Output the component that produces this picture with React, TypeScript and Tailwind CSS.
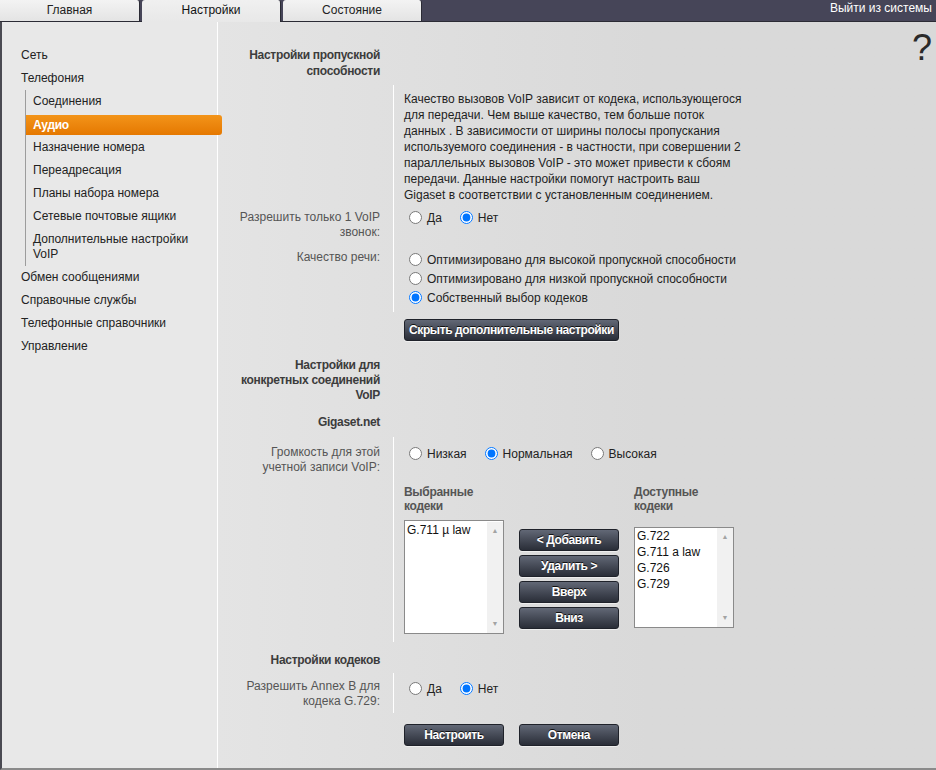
import { useState } from "react";

// left menu of the settings page
const topMenu = ["Сеть", "Телефония"];
const subMenu = [
  "Соединения",
  "Аудио",
  "Назначение номера",
  "Переадресация",
  "Планы набора номера",
  "Сетевые почтовые ящики",
  "Дополнительные настройки VoIP",
];
const bottomMenu = ["Обмен сообщениями", "Справочные службы", "Телефонные справочники", "Управление"];

function DarkButton({ children, className = "" }: { children: React.ReactNode; className?: string }) {
  return (
    <button
      className={
        "block h-[22px] w-[100px] whitespace-nowrap rounded-[3px] border border-[#1f222a] bg-gradient-to-b from-[#626876] to-[#2a2e38] text-[12px] font-bold tracking-[-0.4px] text-white shadow-[0_1px_0_rgba(255,255,255,0.5)] [text-shadow:0_-1px_0_#111] " +
        className
      }
    >
      {children}
    </button>
  );
}

function Radio({ name, label, checked, onChange }: { name: string; label: string; checked: boolean; onChange: () => void }) {
  return (
    <label className="flex items-center">
      <input type="radio" name={name} checked={checked} onChange={onChange} className="ml-[5px] h-[13px] w-[13px]" />
      <span className="ml-[5px] text-[#222]">{label}</span>
    </label>
  );
}

function Field({
  label,
  children,
  divider = true,
  labelClass = "",
  cellClass = "",
}: {
  label?: React.ReactNode;
  children: React.ReactNode;
  divider?: boolean;
  labelClass?: string;
  cellClass?: string;
}) {
  return (
    <div className="flex">
      <div className={"w-[150px] shrink-0 text-right leading-[15px] text-[#555] " + labelClass}>{label}</div>
      <div className={"ml-[13px] border-l pl-[10px] " + (divider ? "border-white " : "border-transparent ") + cellClass}>
        {children}
      </div>
    </div>
  );
}

function ListBox({ items, className = "" }: { items: string[]; className?: string }) {
  return (
    <div className={"flex w-[100px] border border-[#8a8a8a] bg-white " + className}>
      <div className="flex-1 pl-[2px] leading-[16px] text-[#111]">
        {items.map((it) => (
          <div key={it}>{it}</div>
        ))}
      </div>
      <div className="flex w-[16px] flex-col items-center justify-between bg-[#f1f1f1] py-[5px] text-[7px] leading-[8px] text-[#a3a3a3]">
        <span>▲</span>
        <span>▼</span>
      </div>
    </div>
  );
}

export default function App() {
  const [single, setSingle] = useState("no");
  const [quality, setQuality] = useState("own");
  const [volume, setVolume] = useState("normal");
  const [annex, setAnnex] = useState("no");

  return (
    <div className="h-[770px] w-[936px] overflow-hidden bg-[#d9d9d9] font-['Liberation_Sans',Arial,sans-serif] text-[12px]">
      {/* top bar with tabs */}
      <div className="flex h-[22px] items-start gap-[2px] border-b border-[#2b2b35] bg-[#464558]">
        <div className="h-[21px] w-[140px] rounded-tr-[3px] border-r border-[#2b2b35] bg-gradient-to-b from-[#f3f3f3] to-[#e4e4e4] text-center leading-[21px] text-[#222]">
          Главная
        </div>
        <div className="relative z-10 h-[22px] w-[139px] rounded-t-[3px] border-r border-[#2b2b35] bg-gradient-to-b from-[#f0f0f0] to-[#e8e8e8] text-center leading-[21px] text-[#111]">
          Настройки
        </div>
        <div className="h-[21px] w-[139px] rounded-t-[3px] border-r border-[#2b2b35] bg-gradient-to-b from-[#f3f3f3] to-[#e4e4e4] text-center leading-[21px] text-[#222]">
          Состояние
        </div>
        <div className="ml-auto pr-[4px] pt-[1px] leading-[14px] text-white">Выйти из системы</div>
      </div>

      <div className="flex h-[748px] border-b-2 border-l-2 border-b-[#8a8a8a] border-l-[#4a4a52]">
        {/* sidebar */}
        <div className="relative z-10 w-[216px] shrink-0 border-r border-white bg-[#e8e8e8] pt-[22px] text-[#222]">
          {topMenu.map((m) => (
            <div key={m} className="h-[23px] pl-[19px] leading-[23px]">
              {m}
            </div>
          ))}
          <div className="ml-[23px] border-l border-[#9c9c9c]">
            {subMenu.map((m) =>
              m === "Аудио" ? (
                <div key={m} className="flex h-[23px] items-center">
                  <div className="h-[20px] w-[196px] shrink-0 rounded-r-[3px] bg-gradient-to-b from-[#f39418] to-[#e57800] pl-[7px] font-bold leading-[20px] tracking-[-0.3px] text-white">
                    {m}
                  </div>
                </div>
              ) : (
                <div key={m} className="py-[4px] pl-[7px] pr-[20px] leading-[15px]">
                  {m}
                </div>
              )
            )}
          </div>
          {bottomMenu.map((m) => (
            <div key={m} className="h-[23px] pl-[19px] leading-[23px]">
              {m}
            </div>
          ))}
        </div>

        {/* main pane */}
        <div className="flex flex-1 bg-gradient-to-r from-[#e4e4e4] via-[#d9d9d9] via-60% to-[#d9d9d9]">
          <div className="flex-1 pl-[12px] pt-[25px]">
            <div className="w-[150px] text-right font-bold leading-[16px] tracking-[-0.3px] text-[#3c3c3c]">
              Настройки пропускной способности
            </div>

            <div className="mt-[6px]">
              <Field cellClass="pt-[6px] pb-[6px]">
                <div className="leading-[16px] text-[#1e1e1e]">
                  Качество вызовов VoIP зависит от кодека, использующегося
                  <br />
                  для передачи. Чем выше качество, тем больше поток
                  <br />
                  данных . В зависимости от ширины полосы пропускания
                  <br />
                  используемого соединения - в частности, при совершении 2
                  <br />
                  параллельных вызовов VoIP - это может привести к сбоям
                  <br />
                  передачи. Данные настройки помогут настроить ваш
                  <br />
                  Gigaset в соответствии с установленным соединением.
                </div>
              </Field>
              <Field label="Разрешить только 1 VoIP звонок:" labelClass="pt-[1px] pb-[10px]" cellClass="pt-[1px]">
                <div className="flex h-[15px] items-center gap-[13px]">
                  <Radio name="single" label="Да" checked={single === "yes"} onChange={() => setSingle("yes")} />
                  <Radio name="single" label="Нет" checked={single === "no"} onChange={() => setSingle("no")} />
                </div>
              </Field>
              <Field label="Качество речи:" cellClass="pb-[5px]">
                <div className="flex h-[19px] items-center">
                  <Radio name="q" label="Оптимизировано для высокой пропускной способности" checked={quality === "high"} onChange={() => setQuality("high")} />
                </div>
                <div className="flex h-[19px] items-center">
                  <Radio name="q" label="Оптимизировано для низкой пропускной способности" checked={quality === "low"} onChange={() => setQuality("low")} />
                </div>
                <div className="flex h-[19px] items-center">
                  <Radio name="q" label="Собственный выбор кодеков" checked={quality === "own"} onChange={() => setQuality("own")} />
                </div>
              </Field>
            </div>

            <div className="mt-[7px]">
              <Field divider={false}>
                <DarkButton className="w-[215px]">Скрыть дополнительные настройки</DarkButton>
              </Field>
            </div>

            <div className="mt-[17px] w-[150px] text-right font-bold leading-[15px] tracking-[-0.3px] text-[#3c3c3c]">
              Настройки для конкретных соединений VoIP
            </div>
            <div className="mt-[12px] w-[150px] text-right font-bold leading-[15px] tracking-[-0.3px] text-[#3c3c3c]">Gigaset.net</div>

            <div className="mt-[7px]">
              <Field label="Громкость для этой учетной записи VoIP:" labelClass="pt-[8px]" cellClass="pt-[9px] pb-[8px]">
                <div className="flex h-[15px] items-center gap-[13px]">
                  <Radio name="v" label="Низкая" checked={volume === "low"} onChange={() => setVolume("low")} />
                  <Radio name="v" label="Нормальная" checked={volume === "normal"} onChange={() => setVolume("normal")} />
                  <Radio name="v" label="Высокая" checked={volume === "high"} onChange={() => setVolume("high")} />
                </div>
                <div className="mt-[24px] flex">
                  <div className="w-[100px]">
                    <div className="font-bold leading-[14px] tracking-[-0.3px] text-[#555]">
                      Выбранные
                      <br />
                      кодеки
                    </div>
                    <ListBox items={["G.711 µ law"]} className="mt-[7px] h-[114px] pt-[1px]" />
                  </div>
                  <div className="ml-[15px] flex w-[100px] flex-col gap-[4px] pt-[44px]">
                    <DarkButton className="h-[21px]">&lt; Добавить</DarkButton>
                    <DarkButton className="h-[21px]">Удалить &gt;</DarkButton>
                    <DarkButton className="h-[21px]">Вверх</DarkButton>
                    <DarkButton className="h-[21px]">Вниз</DarkButton>
                  </div>
                  <div className="ml-[15px] w-[100px]">
                    <div className="font-bold leading-[14px] tracking-[-0.3px] text-[#555]">
                      Доступные
                      <br />
                      кодеки
                    </div>
                    <ListBox items={["G.722", "G.711 a law", "G.726", "G.729"]} className="mt-[14px] h-[101px]" />
                  </div>
                </div>
              </Field>
            </div>

            <div className="mt-[11px] w-[150px] text-right font-bold leading-[15px] tracking-[-0.3px] text-[#3c3c3c]">Настройки кодеков</div>

            <div className="mt-[5px]">
              <Field label="Разрешить Annex B для кодека G.729:" labelClass="pt-[6px] pb-[4px]" cellClass="pt-[8px]">
                <div className="flex h-[15px] items-center gap-[13px]">
                  <Radio name="a" label="Да" checked={annex === "yes"} onChange={() => setAnnex("yes")} />
                  <Radio name="a" label="Нет" checked={annex === "no"} onChange={() => setAnnex("no")} />
                </div>
              </Field>
            </div>

            <div className="mt-[11px]">
              <Field divider={false}>
                <div className="flex gap-[15px]">
                  <DarkButton>Настроить</DarkButton>
                  <DarkButton>Отмена</DarkButton>
                </div>
              </Field>
            </div>
          </div>
          <div className="pr-[4px] pt-[6px] text-[36px] leading-[40px] text-[#2a2a2a]">?</div>
        </div>
      </div>
    </div>
  );
}
